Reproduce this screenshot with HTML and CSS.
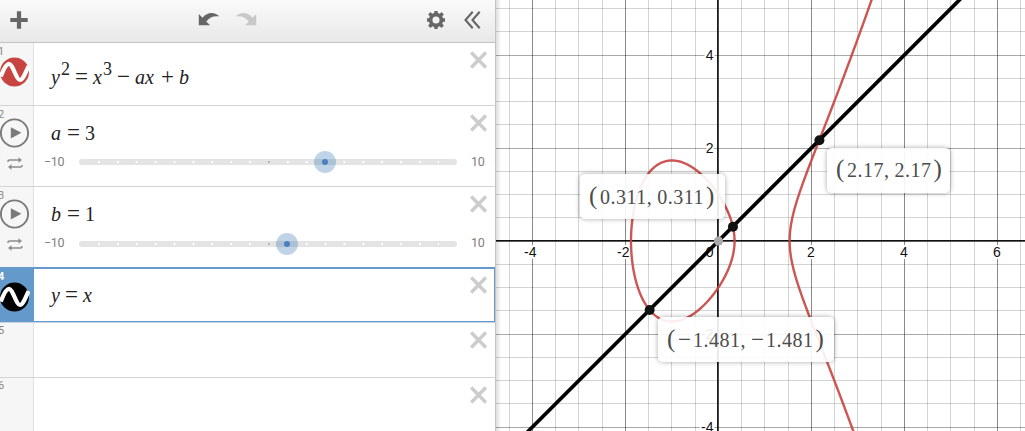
FILE: index.html
```html
<!DOCTYPE html>
<html lang="en">
<head>
<meta charset="utf-8">
<title>Graphing Calculator</title>
<link rel="stylesheet" href="styles.css">
</head>
<body>
<svg class="defs" width="0" height="0">
  <symbol id="close" viewBox="0 0 18 18"><path d="M1.2 1.5L15.900 16.500M15.900 1.5L1.2 16.500" stroke="#ccc" stroke-width="3.4"/></symbol>
  <symbol id="play" viewBox="0 0 30 30"><circle cx="14.5" cy="15" r="13.6" fill="none" stroke="#7a7a7a" stroke-width="1.9"/><path d="M10.8 9.2V20.4L21.4 14.8Z" fill="#7a7a7a"/></symbol>
  <symbol id="loop" viewBox="0 0 16 13"><path d="M1 5V4.2Q1 3 2.5 3H12M15 8V8.8Q15 10 13.500 10H4" fill="none" stroke="#8c8c8c" stroke-width="1.5"/><path d="M11.500 .2L15 3L11.500 5.800ZM4.500 7.200L1 10L4.500 12.800Z" fill="#8c8c8c"/></symbol>
  <symbol id="wave" viewBox="0 0 30 30"><circle cx="14.500" cy="15" r="14.500"/><path d="M.8 19.500C4 11 6.500 6.800 9 6.800C12.800 6.800 16.200 23 20 23C22.800 23 25 17 28.600 9" fill="none" stroke="#fff" stroke-width="4.200"/></symbol>
  <symbol id="track" viewBox="0 0 378 22">
    <rect x="0" y="8" width="378" height="6" rx="3" fill="#e4e4e4"/>
    <path d="M19 11H360" stroke="#fff" stroke-width="2" stroke-dasharray="2 16.880"/>
    <rect x="188.900" y="10" width="2" height="2" fill="#b5b5b5"/>
  </symbol>
</svg>
<main class="app">
  <section class="panel">
    <header class="toolbar">
      <svg class="plus" width="18" height="18"><path d="M9 .3V17.700M.3 9H17.700" stroke="#666" stroke-width="4.200"/></svg>
      <svg class="undo" width="22" height="14"><path d="M.8 2V13.200H12L8.300 9.600C11.500 5.300 16 3.700 21.500 4.600C17 -.3 9.500 -.4 4.500 5.700Z" fill="#666"/></svg>
      <svg class="redo" width="22" height="14"><path d="M21.200 2V13.200H10L13.700 9.600C10.500 5.300 6 3.700 .5 4.600C5 -.3 12.500 -.4 17.500 5.700Z" fill="#c8c8c8"/></svg>
      <svg class="gear" width="18" height="18" viewBox="-9 -9 18 18"><circle r="5.400" fill="none" stroke="#666" stroke-width="3.700"/><path d="M0 -9V-6M0 9V6M-9 0H-6M9 0H6M-6.700 -6.700L-4.500 -4.500M6.700 6.700L4.500 4.500M-6.700 6.700L-4.500 4.500M6.700 -6.700L4.500 -4.500" stroke="#666" stroke-width="3.400"/></svg>
      <svg class="collapse" width="17" height="18"><path d="M8.700 .8L1.500 9L8.700 17.200M15.700 .8L8.500 9L15.700 17.200" fill="none" stroke="#666" stroke-width="2.100"/></svg>
    </header>

    <div class="row first">
      <div class="gutter"><span class="num">1</span><svg class="badge red"><use href="#wave"/></svg></div>
      <div class="body"><div class="math"><i>y</i><sup>2</sup><b>=</b><i>x</i><sup>3</sup><b class="wide">−</b><i class="pair">ax</i><b class="wide">+</b><i>b</i></div></div>
      <svg class="close"><use href="#close"/></svg>
    </div>
    <div class="row slide">
      <div class="gutter"><span class="num">2</span><svg class="badge"><use href="#play"/></svg><svg class="loop"><use href="#loop"/></svg></div>
      <div class="body"><div class="math"><i class="ab">a</i><b>=</b><span>3</span></div>
        <div class="slider"><span class="min">−10</span><svg class="track" width="378" height="22"><use href="#track"/><circle cx="246" cy="11" r="11" fill="#2d70b3" fill-opacity=".3"/><circle cx="246" cy="11" r="3" fill="#4a80c0"/></svg><span>10</span></div></div>
      <svg class="close"><use href="#close"/></svg>
    </div>
    <div class="row slide third">
      <div class="gutter"><span class="num">3</span><svg class="badge"><use href="#play"/></svg><svg class="loop"><use href="#loop"/></svg></div>
      <div class="body"><div class="math"><i class="ab">b</i><b>=</b><span>1</span></div>
        <div class="slider"><span class="min">−10</span><svg class="track" width="378" height="22"><use href="#track"/><circle cx="208" cy="11" r="11" fill="#2d70b3" fill-opacity=".3"/><circle cx="208" cy="11" r="3" fill="#4a80c0"/></svg><span>10</span></div></div>
      <svg class="close"><use href="#close"/></svg>
    </div>
    <div class="row selected">
      <div class="gutter"><span class="num">4</span><svg class="badge"><use href="#wave"/></svg></div>
      <div class="body"><div class="math"><i>y</i><b>=</b><i>x</i></div></div>
      <svg class="close"><use href="#close"/></svg>
    </div>
    <div class="row empty"><div class="gutter"><span class="num">5</span></div><div class="body"></div><svg class="close"><use href="#close"/></svg></div>
    <div class="row empty"><div class="gutter"><span class="num">6</span></div><div class="body"></div><svg class="close"><use href="#close"/></svg></div>
  </section>

  <section class="graph">
    <svg id="plot" width="529" height="431" viewBox="496 0 529 431"></svg>
    <div class="tip tip-a"><em>(</em><span>0.311,</span><span class="second">0.311</span><em>)</em></div>
    <div class="tip tip-b"><em>(</em><span>2.17,</span><span class="second">2.17</span><em>)</em></div>
    <div class="tip tip-c"><em>(</em><u>−</u><span>1.481,</span><u class="second">−</u><span>1.481</span><em>)</em></div>
  </section>
</main>
<script src="graph.js"></script>
</body>
</html>
```
FILE: styles.css
```css
* { box-sizing: border-box; }
body { margin: 0; overflow: hidden; background: #fff; }
svg { display: block; flex: none; }
.defs { position: absolute; }
.app { display: flex; width: 1025px; height: 431px; overflow: hidden; }
.panel { width: 496px; height: 431px; flex: none; border-right: 1px solid #c4c4c4; overflow: hidden; }
.toolbar { display: flex; height: 43px; padding: 11px 0 0 10px; background: linear-gradient(#fafafa, #e8e8e8); border-bottom: 1px solid #c4c4c4; }
.undo { margin: 1px 0 0 170px; }
.redo { margin: 1px 0 0 15px; }
.gear { margin-left: 170px; }
.collapse { margin-left: 19px; }

.row { display: flex; height: 81px; border-bottom: 1px solid #d4d4d4; }
.first { height: 63px; }
.gutter { width: 34px; flex: none; padding-top: 3px; background: #f6f6f6; border-right: 1px solid #e2e2e2; }
.num { display: block; height: 10px; margin-left: -2px; font: 11px/12px Roboto, sans-serif; color: #888; }
.badge { width: 30px; height: 30px; margin-top: -1px; }
.first .badge { margin-top: 1px; }
.red { fill: #c74440; }
.loop { width: 16px; height: 13px; margin: 9px 0 0 7px; }
.body { flex: 1; min-width: 0; }
.close { width: 18px; height: 18px; margin: 8px 7px 0 0; }

.math { display: flex; height: 24px; margin: 15px 0 0 17px; font: 20px/24px "Liberation Serif", serif; color: #222; }
.first .math { margin-top: 22px; }
.math i { width: 9px; flex: none; }
.math .ab { width: 11px; }
.math .pair { width: 19px; }
.math sup { width: 9px; margin-left: 1px; font-size: 18px; line-height: 8px; vertical-align: baseline; }
.math b { width: 13px; margin: 0 5px; font-weight: normal; font-size: 23px; }
.math .wide { margin: 0 6px; }
.math sup + .wide { margin-left: 5px; }
.math .wide + i { margin-left: -1px; }
.math .pair { margin-right: 1px; }

.slider { display: flex; align-items: center; height: 22px; margin: 6px 0 0 10px; font: 12.500px/22px Roboto, sans-serif; letter-spacing: -.3px; color: #808080; }
.slider span { flex: none; }
.min { width: 35px; }
.track { margin-right: 14px; overflow: visible; }
.third .slider { margin-top: 7px; }
.third .slider span { margin-top: -2px; }

.selected { height: 55px; margin-top: -1px; border: solid #6699cc; border-width: 2px 1px 1px 0; box-shadow: 0 1px #c8d3df; }
.selected .gutter { background: #6499cc; border-color: #6499cc; padding-top: 2px; }
.selected .num { color: #fff; font-weight: bold; }
.selected .badge { margin-top: 1px; }
.selected .math { margin-top: 14px; }
.selected .close { margin-top: 7px; margin-right: 6px; }
.empty { height: 55px; }
.selected + .empty { height: 56px; margin-top: 0; border-top: 1px solid #c8d3df; }
.empty .gutter { padding-top: 2px; }

.graph { position: relative; width: 529px; height: 431px; overflow: hidden; }
.graph::after { content: ""; position: absolute; inset: 0 auto 0 0; width: 5px; background: linear-gradient(90deg, rgba(0,0,0,.13), transparent); }
.axis-label { font: 14px "Liberation Sans", sans-serif; fill: #111; stroke: #fff; stroke-width: 4px; stroke-linejoin: round; paint-order: stroke; }
.tip { position: absolute; display: flex; height: 45px; padding: 12px 0 0 9px; border-radius: 5px; background: rgba(255,255,255,.9); box-shadow: 0 0 5px rgba(0,0,0,.35); font: 20px/22px "Liberation Serif", serif; letter-spacing: .5px; color: #4c4c4c; }
.tip em { width: 8px; font-style: normal; font-size: 25px; line-height: 19px; letter-spacing: 0; }
.tip span + em { margin-left: 2px; }
.tip em:first-child { width: 11px; }
.tip .second { margin-left: 5px; }
.tip u { width: 15px; text-decoration: none; font-size: 23px; }
.tip-a { left: 84px; top: 174px; width: 145px; }
.tip-b { left: 331px; top: 148px; width: 123px; padding-top: 11px; }
.tip-c { left: 162px; top: 317px; width: 176px; }
```
FILE: graph.js
```js
const OX = 718, OY = 241, UNIT = 46.5;
const px = x => OX + x * UNIT;
const py = y => OY - y * UNIT;
let out = '';

for (let k = -9; k <= 13; k++) {
  const x = Math.round(px(k / 2) - 0.1) + 0.5;
  const major = k % 4 === 0;
  out += `<path d="M${x} 0V431" stroke="#000" stroke-opacity="${major ? 0.46 : 0.17}"/>`;
}
for (let k = -8; k <= 10; k++) {
  const y = Math.round(py(k / 2) - 0.3) + 0.5;
  const major = k % 4 === 0;
  out += `<path d="M496 ${y}H1025" stroke="#000" stroke-opacity="${major ? 0.34 : 0.17}"/>`;
}
out += '<path d="M717.800 0V431M496 240.700H1025" stroke="#111" stroke-width="1.500"/>';

const label = (x, y, anchor, t) => {
  out += `<text class="axis-label" x="${x}" y="${y}" text-anchor="${anchor}">${t}</text>`;
};
label(536.5, 257, 'end', '-4');
label(629.5, 257, 'end', '-2');
label(713.5, 257, 'end', '0');
for (const n of [2, 4, 6]) label(px(n), 257, 'middle', n);
for (const n of [4, 2, -2, -4]) label(713.500, py(n) + 4.500, 'end', n);

// y^2 = x^3 - 3x + 1, sampled between consecutive roots
function branch(a, b) {
  const pts = [];
  for (let i = 0; i <= 200; i++) {
    const x = (a + b) / 2 - (b - a) / 2 * Math.cos(Math.PI * i / 200);
    pts.push([x, Math.sqrt(Math.max(0, x * x * x - 3 * x + 1))]);
  }
  return pts;
}
const curve = pts => {
  out += `<path d="M${pts.map(p => (px(p[0]) + 0.4).toFixed(2) + ' ' + py(p[1]).toFixed(2)).join('L')}" fill="none" stroke="#c74440" stroke-opacity=".9" stroke-width="2.400"/>`;
};
const mirror = pts => pts.map(p => [p[0], -p[1]]).reverse();
const oval = branch(-1.87939, 0.34730);
const arm = branch(1.53209, 4);
curve(oval.concat(mirror(oval)));
curve(mirror(arm).concat(arm));

out += `<path d="M${px(-5) + 0.4} ${py(-5)}L${px(6) + 0.4} ${py(6)}" stroke="#000" stroke-width="3.700"/>`;
out += `<circle cx="718.500" cy="241" r="4.600" fill="#aaa"/>`;
for (const v of [-1.481, 0.311, 2.17]) out += `<circle cx="${px(v) + 0.5}" cy="${py(v) + 0.2}" r="5" fill="#111"/>`;
document.getElementById('plot').innerHTML = out;
```
